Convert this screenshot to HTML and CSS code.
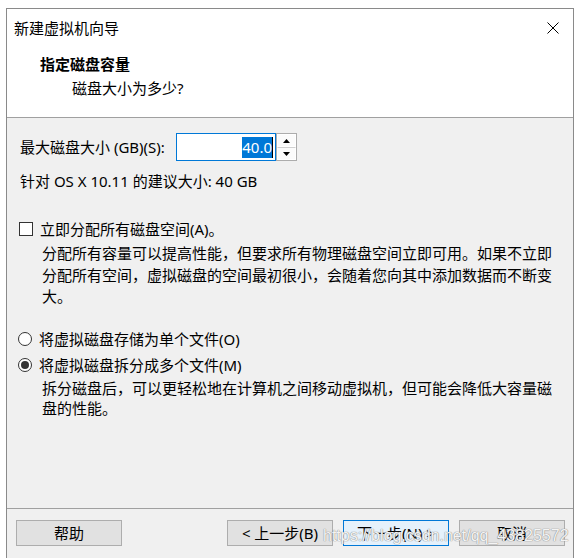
FILE: index.html
```html
<!DOCTYPE html>
<html lang="zh-CN">
<head>
<meta charset="utf-8">
<title>新建虚拟机向导</title>
<link rel="stylesheet" href="styles.css">
</head>
<body>
<div class="window">
  <div class="titlebar">
    <span class="title">新建虚拟机向导</span>
    <svg class="close" width="12" height="12" viewBox="0 0 12 12"><path d="M0.5 0.5 L11.5 11.5 M11.5 0.5 L0.5 11.5" stroke="#000" stroke-width="1" fill="none"/></svg>
  </div>
  <div class="header">
    <div class="h-title">指定磁盘容量</div>
    <div class="h-sub">磁盘大小为多少?</div>
  </div>
  <div class="content">
    <div class="size-row">
      <span class="size-label">最大磁盘大小 (GB)(S):</span>
      <div class="spin-input"><span class="sel">40.0</span><span class="caret"></span></div>
      <div class="spin-btns">
        <div class="spin-btn"><svg width="7" height="4" viewBox="0 0 7 4"><path d="M3.5 0 L7 4 L0 4 Z" fill="#000"/></svg></div>
        <div class="spin-btn"><svg width="7" height="4" viewBox="0 0 7 4"><path d="M0 0 L7 0 L3.5 4 Z" fill="#000"/></svg></div>
      </div>
    </div>
    <div class="hint">针对 OS X 10.11 的建议大小: 40 GB</div>
    <div class="opt-row check-row"><span class="checkbox"></span><span>立即分配所有磁盘空间(A)。</span></div>
    <p class="desc">分配所有容量可以提高性能，但要求所有物理磁盘空间立即可用。如果不立即分配所有空间，虚拟磁盘的空间最初很小，会随着您向其中添加数据而不断变大。</p>
    <div class="opt-row radio-row first"><span class="radio"></span><span>将虚拟磁盘存储为单个文件(O)</span></div>
    <div class="opt-row radio-row"><span class="radio checked"></span><span>将虚拟磁盘拆分成多个文件(M)</span></div>
    <p class="desc desc2">拆分磁盘后，可以更轻松地在计算机之间移动虚拟机，但可能会降低大容量磁盘的性能。</p>
  </div>
  <div class="footer">
    <button class="btn">帮助</button>
    <div class="spacer"></div>
    <button class="btn">&lt; 上一步(B)</button>
    <button class="btn default">下一步(N) &gt;</button>
    <button class="btn">取消</button>
  </div>
  <div class="watermark">https://blog.csdn.net/qq_43825572</div>
</div>
</body>
</html>
```

FILE: styles.css
```css
html, body {
  margin: 0;
  padding: 0;
  background: #ffffff;
}
body {
  font-family: "Noto Sans", "Noto Sans CJK SC", sans-serif;
  font-size: 15px;
  color: #000;
  overflow: hidden;
}
.window {
  position: relative;
  margin: 8px 0 0 6px;
  width: 568px;
  height: 560px;
  box-sizing: border-box;
  border: 1px solid #8a8a8a;
  border-bottom: none;
  background: #f0f0f0;
  display: flex;
  flex-direction: column;
}
.titlebar {
  height: 38px;
  background: #fff;
  display: flex;
  align-items: center;
  justify-content: space-between;
  padding: 0 14px 0 7px;
}
.title {
  line-height: 20px;
}
.close {
  display: block;
}
.header {
  height: 71px;
  background: #fff;
  box-sizing: border-box;
  padding: 5px 0 0 33px;
  border-bottom: 1px solid #a0a0a0;
}
.h-title {
  font-weight: bold;
  line-height: 24px;
}
.h-sub {
  line-height: 24px;
  padding-left: 32px;
}
.content {
  height: 391px;
  box-sizing: border-box;
  padding: 15px 13px 0 13px;
  border-bottom: 1px solid #a0a0a0;
}
.size-row {
  display: flex;
  align-items: center;
  height: 28px;
}
.size-label {
  width: 156px;
  line-height: 22px;
}
.spin-input {
  width: 100px;
  height: 28px;
  box-sizing: border-box;
  border: 1px solid #0078d7;
  background: #fff;
  display: flex;
  align-items: center;
  justify-content: flex-end;
  padding-right: 2px;
}
.sel {
  background: #0078d7;
  color: #fff;
  line-height: 21px;
}
.caret {
  width: 1px;
  height: 21px;
  background: #000;
}
.spin-btns {
  width: 21px;
  height: 28px;
  box-sizing: border-box;
  border: 1px solid #acacac;
  background: #fff;
  display: flex;
  flex-direction: column;
}
.spin-btn {
  flex: 1;
  display: flex;
  align-items: center;
  justify-content: center;
  border: 1px solid #fff;
  background: #fbfbfb;
}
.spin-btn + .spin-btn {
  border-top: 1px solid #d0d0d0;
}
.spin-btn svg {
  display: block;
}
.hint {
  margin-top: 9px;
  line-height: 22px;
}
.opt-row {
  display: flex;
  align-items: center;
  line-height: 22px;
}
.check-row {
  margin-top: 26px;
  margin-left: -1px;
}
.checkbox {
  width: 14px;
  height: 14px;
  box-sizing: border-box;
  border: 1px solid #333;
  background: #fff;
  margin-right: 7px;
}
.desc {
  margin: 3px 0 0 0;
  padding-left: 22px;
  line-height: 21.5px;
}
.radio-row {
  margin-left: -2px;
}
.radio-row.first {
  margin-top: 20px;
}
.radio-row + .radio-row {
  margin-top: 4px;
}
.radio {
  width: 14px;
  height: 14px;
  box-sizing: border-box;
  border: 1px solid #333;
  border-radius: 50%;
  background: #fff;
  margin-right: 7px;
  display: flex;
  align-items: center;
  justify-content: center;
}
.radio.checked::after {
  content: "";
  width: 8px;
  height: 8px;
  border-radius: 50%;
  background: #333;
}
.desc2 {
  margin-top: 2px;
  line-height: 20.5px;
}
.footer {
  display: flex;
  padding: 11px 8px 0 9px;
  gap: 10px;
}
.spacer {
  flex: 1;
}
.btn {
  width: 106px;
  height: 26px;
  box-sizing: border-box;
  border: 1px solid #adadad;
  background: #e1e1e1;
  font-family: "Noto Sans", "Noto Sans CJK SC", sans-serif;
  font-size: 15px;
  line-height: 22px;
  padding: 0;
  color: #000;
}
.btn.default {
  border-color: #0078d7;
  background: #e5f1fb;
}
.watermark {
  position: absolute;
  left: 316px;
  top: 516px;
  font-family: "Liberation Sans", sans-serif;
  font-size: 16px;
  line-height: 22px;
  color: rgba(255, 255, 255, 0.92);
  text-shadow: 0 0 1px #888, 0 0 1px #888;
  white-space: nowrap;
}
```
